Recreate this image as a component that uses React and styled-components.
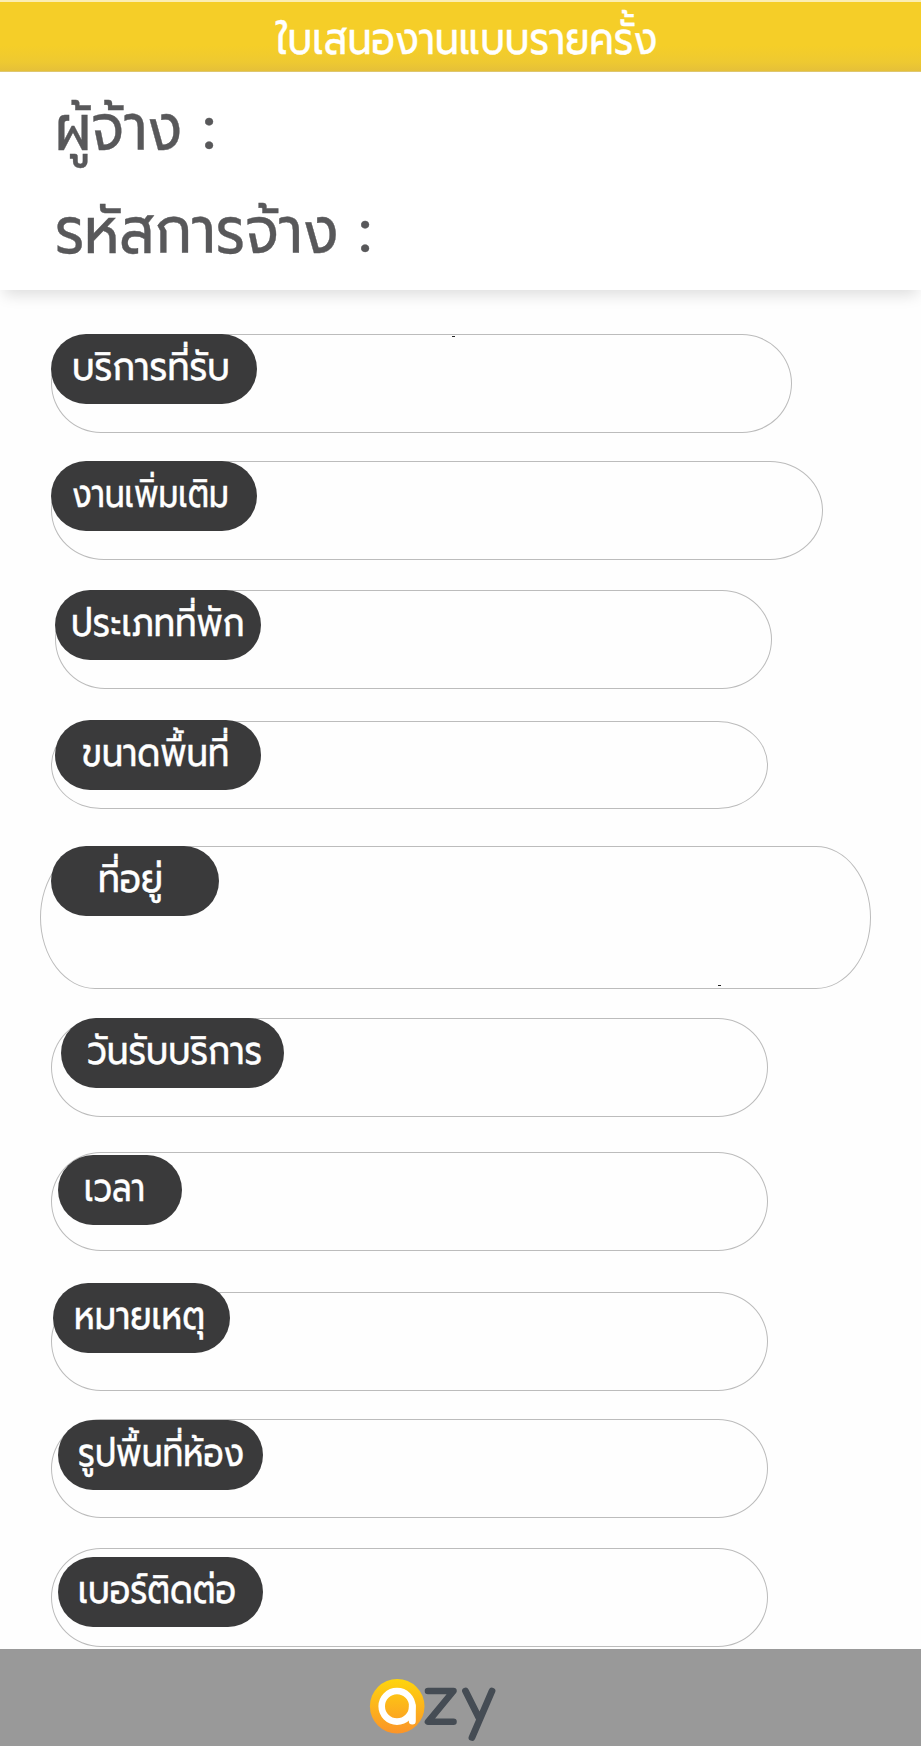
import React, { useLayoutEffect, useRef, useState } from "react";
import styled, { createGlobalStyle } from "styled-components";

const GlobalStyle = createGlobalStyle`
  * { box-sizing: border-box; }
  body {
    margin: 0;
    background: #fefefe;
    font-family: "Prompt", "Kanit", "Noto Sans Thai", "Open Sans", "Noto Sans", sans-serif;
  }
`;

const Page = styled.main`
  display: flex;
  flex-direction: column;
  width: 921px;
  height: 1746px;
  overflow: hidden;
`;

const TopBar = styled.header`
  flex: none;
  height: 72px;
  padding-left: 276px;
  border-top: 2px solid #fbeeb4;
  background: linear-gradient(#f5ce28 0, #f5ce28 44px, #eec931 60px, #e5c039 69px, #d9cfa8 70px);
  color: #fff;
`;

const Summary = styled.section`
  flex: none;
  height: 218px;
  padding-left: 55px;
  background: #fff;
  box-shadow: 0 9px 14px -4px rgba(0, 0, 0, 0.13);
  color: #58585a;
`;

const SummaryLine = styled.div`
  display: flex;
  height: 103px;
  gap: ${(p) => p.$gap}px;
`;

const Form = styled.section`
  flex: none;
  height: 1359px;
  padding-top: 44px;
`;

const Field = styled.div`
  display: flex;
  align-items: flex-start;
  width: ${(p) => p.$w}px;
  height: ${(p) => p.$h}px;
  margin-left: ${(p) => p.$x}px;
  margin-bottom: ${(p) => p.$gap}px;
  border: 1px solid #bcbcbc;
  border-radius: ${(p) => p.$rx}px / 50%;
`;

const Pill = styled.div`
  flex: none;
  width: ${(p) => p.$w}px;
  height: 69.5px;
  margin: ${(p) => p.$dy - 1}px 0 0 ${(p) => p.$dx - 1}px;
  padding-left: ${(p) => p.$pad}px;
  border-radius: 35px;
  background: #3a3a3b;
  color: #fff;
`;

const Speck = styled.i`
  width: 3px;
  height: 1px;
  margin: ${(p) => p.$y}px 0 0 ${(p) => p.$x}px;
  background: #222;
`;

const TextBox = styled.span`
  display: block;
  flex: none;
  width: ${(p) => p.$w}px;
  height: ${(p) => p.$line}px;
  line-height: ${(p) => p.$line}px;
  font-size: ${(p) => p.$size}px;
  -webkit-text-stroke: 0.4px currentColor;
  white-space: nowrap;
`;

const Stretch = styled.span`
  display: inline-block;
  transform-origin: 0 50%;
`;

const Footer = styled.footer`
  display: flex;
  flex: none;
  height: 97px;
  padding: 28px 0 0 369px;
  background: #999;
`;

/* Text stretched horizontally to fill the given width. */
function FitText({ w, size, line, children }) {
  const ref = useRef(null);
  const [scale, setScale] = useState(1);
  useLayoutEffect(() => {
    setScale(w / ref.current.offsetWidth);
  }, [w, size, children]);
  return (
    <TextBox $w={w} $size={size} $line={line}>
      <Stretch ref={ref} style={{ transform: `scaleX(${scale})` }}>{children}</Stretch>
    </TextBox>
  );
}

const fields = [
  { text: "บริการที่รับ", x: 51, w: 741, h: 99, rx: 50, gap: 28, pill: [0, 0, 206], pad: 21, tw: 158, speck: [195, 1] },
  { text: "งานเพิ่มเติม", x: 51, w: 772, h: 99, rx: 53, gap: 30, pill: [0, 0, 206], pad: 21, tw: 157 },
  { text: "ประเภทที่พัก", x: 55, w: 717, h: 99, rx: 50, gap: 32, pill: [0, 0, 206], pad: 16, tw: 174 },
  { text: "ขนาดพื้นที่", x: 51, w: 717, h: 88, rx: 50, gap: 37, pill: [4, -1, 206], pad: 27, tw: 147 },
  { text: "ที่อยู่", x: 40, w: 831, h: 143, rx: 55, gap: 29, pill: [11, 0, 168], pad: 47, tw: 65, speck: [499, 138] },
  { text: "วันรับบริการ", x: 51, w: 717, h: 99, rx: 50, gap: 35, pill: [10, 0, 223], pad: 26, tw: 175 },
  { text: "เวลา", x: 51, w: 717, h: 99, rx: 50, gap: 41, pill: [7, 3, 124], pad: 26, tw: 61 },
  { text: "หมายเหตุ", x: 51, w: 717, h: 99, rx: 50, gap: 28, pill: [2, -9, 177], pad: 21, tw: 131 },
  { text: "รูปพื้นที่ห้อง", x: 51, w: 717, h: 99, rx: 50, gap: 30, pill: [7, 1, 205], pad: 20, tw: 166 },
  { text: "เบอร์ติดต่อ", x: 51, w: 717, h: 99, rx: 50, gap: 0, pill: [7, 9, 205], pad: 20, tw: 158 },
];

function Logo() {
  return (
    <svg width="128" height="68" viewBox="0 0 128 68" fill="none" strokeLinecap="round" strokeLinejoin="round">
      <defs>
        <linearGradient id="sun" x1="0" y1="0" x2="0" y2="1">
          <stop offset="0" stopColor="#fed50d" />
          <stop offset="1" stopColor="#fb9429" />
        </linearGradient>
      </defs>
      <circle cx="28.2" cy="29.3" r="27.3" fill="url(#sun)" />
      <circle cx="28" cy="29.3" r="15.3" stroke="#fff" strokeWidth="6.6" />
      <path d="M43.3 29V44" stroke="#fff" strokeWidth="7" />
      <path d="M59 14H84.5L59 44.8H84.5" stroke="#454c54" strokeWidth="6.6" />
      <path d="M96.5 14L110.500 42M123 14L103 60.500" stroke="#454c54" strokeWidth="6.8" />
    </svg>
  );
}

export default function App() {
  return (
    <Page>
      <GlobalStyle />
      <TopBar>
        <FitText w={381} size={46} line={74}>ใบเสนองานแบบรายครั้ง</FitText>
      </TopBar>
      <Summary>
        <SummaryLine $gap={20}>
          <FitText w={127} size={66} line={112}>ผู้จ้าง</FitText>
          <FitText w={14} size={66} line={112}>:</FitText>
        </SummaryLine>
        <SummaryLine $gap={20}>
          <FitText w={283} size={66} line={112}>รหัสการจ้าง</FitText>
          <FitText w={14} size={66} line={112}>:</FitText>
        </SummaryLine>
      </Summary>
      <Form>
        {fields.map((f) => (
          <Field key={f.text} $x={f.x} $w={f.w} $h={f.h} $rx={f.rx} $gap={f.gap}>
            <Pill $dx={f.pill[0]} $dy={f.pill[1]} $w={f.pill[2]} $pad={f.pad}>
              <FitText w={f.tw} size={39} line={65}>{f.text}</FitText>
            </Pill>
            {f.speck && <Speck $x={f.speck[0]} $y={f.speck[1]} />}
          </Field>
        ))}
      </Form>
      <Footer>
        <Logo />
      </Footer>
    </Page>
  );
}
